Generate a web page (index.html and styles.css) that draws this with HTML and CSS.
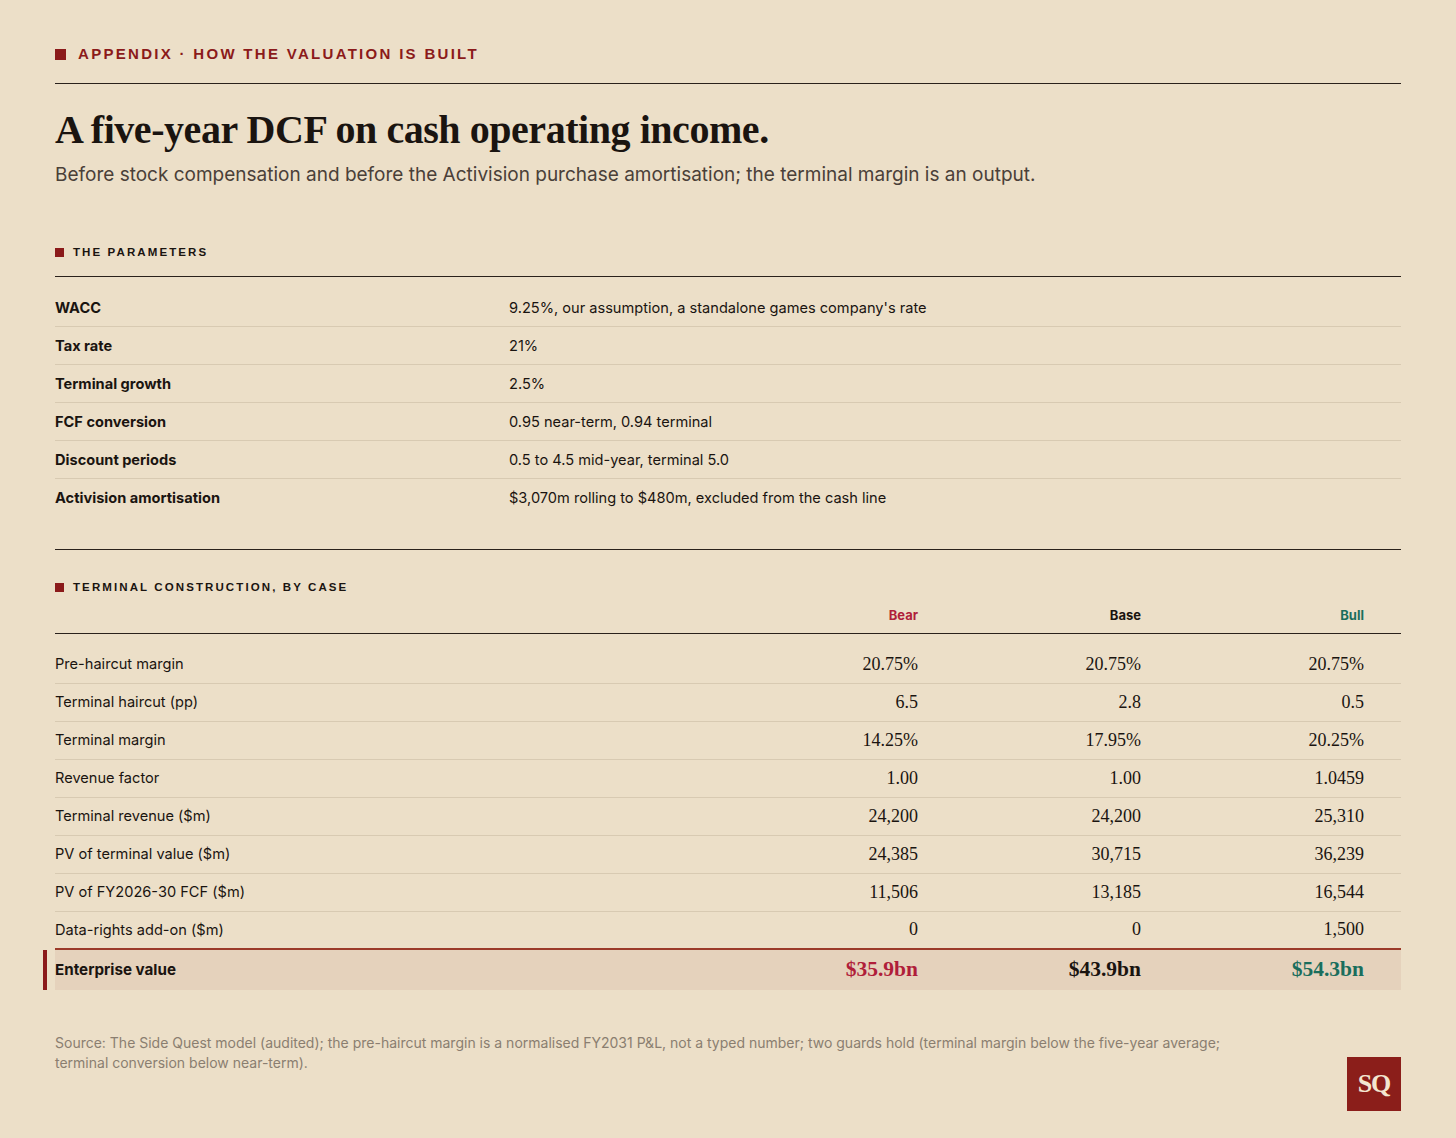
FILE: index.html
```html
<!DOCTYPE html>
<html lang="en">
<head>
<meta charset="utf-8">
<title>Appendix · How the valuation is built</title>
<link rel="stylesheet" href="styles.css">
</head>
<body>
<main class="page">
  <header class="eyebrow"><span class="sq-mark"></span><span>APPENDIX · HOW THE VALUATION IS BUILT</span></header>
  <hr class="rule">
  <h1 class="title">A five-year DCF on cash operating income.</h1>
  <p class="dek">Before stock compensation and before the Activision purchase amortisation; the terminal margin is an output.</p>

  <section class="params">
    <h2 class="label"><span class="sq-small"></span>THE PARAMETERS</h2>
    <div class="ptable">
      <div class="prow"><span class="pkey">WACC</span><span class="pval">9.25%, our assumption, a standalone games company's rate</span></div>
      <div class="prow"><span class="pkey">Tax rate</span><span class="pval">21%</span></div>
      <div class="prow"><span class="pkey">Terminal growth</span><span class="pval">2.5%</span></div>
      <div class="prow"><span class="pkey">FCF conversion</span><span class="pval">0.95 near-term, 0.94 terminal</span></div>
      <div class="prow"><span class="pkey">Discount periods</span><span class="pval">0.5 to 4.5 mid-year, terminal 5.0</span></div>
      <div class="prow"><span class="pkey">Activision amortisation</span><span class="pval">$3,070m rolling to $480m, excluded from the cash line</span></div>
    </div>
  </section>

  <section class="cases">
    <h2 class="label"><span class="sq-small"></span>TERMINAL CONSTRUCTION, BY CASE</h2>
    <div class="ctable">
      <div class="chead"><span></span><span class="num bear">Bear</span><span class="num">Base</span><span class="num bull">Bull</span></div>
      <div class="cbody">
        <div class="crow"><span>Pre-haircut margin</span><span class="num">20.75%</span><span class="num">20.75%</span><span class="num">20.75%</span></div>
        <div class="crow"><span>Terminal haircut (pp)</span><span class="num">6.5</span><span class="num">2.8</span><span class="num">0.5</span></div>
        <div class="crow"><span>Terminal margin</span><span class="num">14.25%</span><span class="num">17.95%</span><span class="num">20.25%</span></div>
        <div class="crow"><span>Revenue factor</span><span class="num">1.00</span><span class="num">1.00</span><span class="num">1.0459</span></div>
        <div class="crow"><span>Terminal revenue ($m)</span><span class="num">24,200</span><span class="num">24,200</span><span class="num">25,310</span></div>
        <div class="crow"><span>PV of terminal value ($m)</span><span class="num">24,385</span><span class="num">30,715</span><span class="num">36,239</span></div>
        <div class="crow"><span>PV of FY2026-30 FCF ($m)</span><span class="num">11,506</span><span class="num">13,185</span><span class="num">16,544</span></div>
        <div class="crow last"><span>Data-rights add-on ($m)</span><span class="num">0</span><span class="num">0</span><span class="num">1,500</span></div>
        <div class="crow total"><span>Enterprise value</span><span class="num bear">$35.9bn</span><span class="num">$43.9bn</span><span class="num bull">$54.3bn</span></div>
      </div>
    </div>
  </section>

  <footer class="foot">
    <p class="source">Source: The Side Quest model (audited); the pre-haircut margin is a normalised FY2031 P&amp;L, not a typed number; two guards hold (terminal margin below the five-year average; terminal conversion below near-term).</p>
    <div class="logo">SQ</div>
  </footer>
</main>
</body>
</html>
```
FILE: styles.css
```css
* { box-sizing: border-box; }
html, body { margin: 0; padding: 0; }
body {
  background: #ecdfc8;
  color: #1a1410;
  font-family: Inter, "Liberation Sans", Arial, sans-serif;
}
.page {
  width: 1456px;
  padding: 45px 55px 0 55px;
}
.eyebrow {
  display: flex;
  align-items: center;
  gap: 12px;
  color: #8b1a1a;
  font-family: "Liberation Sans", Arial, sans-serif;
  font-size: 15px;
  font-weight: 700;
  letter-spacing: 2.3px;
  line-height: 18px;
}
.sq-mark {
  width: 11px;
  height: 11px;
  background: #8b1a1a;
  flex: none;
}
.rule {
  border: 0;
  border-top: 1px solid #2a211b;
  margin: 20px 0 0 0;
}
.title {
  font-family: "Liberation Serif", "Times New Roman", serif;
  font-weight: 700;
  font-size: 40px;
  line-height: 48px;
  letter-spacing: -0.45px;
  margin: 22px 0 0 0;
  color: #1a1410;
}
.dek {
  font-size: 19px;
  line-height: 26px;
  color: #4a4038;
  margin: 8px 0 0 0;
}
.label {
  display: flex;
  align-items: center;
  gap: 9px;
  font-family: "Liberation Sans", Arial, sans-serif;
  font-size: 11.5px;
  font-weight: 700;
  letter-spacing: 2.1px;
  line-height: 14px;
  margin: 0;
  color: #1a1410;
}
.sq-small {
  width: 9px;
  height: 9px;
  background: #8b1a1a;
  flex: none;
}
.params { margin-top: 57px; }
.params .label { margin-bottom: 17px; }
.ptable {
  border-top: 1px solid #2a211b;
  padding-top: 12px;
}
.prow {
  display: grid;
  grid-template-columns: 454px 1fr;
  height: 38px;
  align-items: center;
  border-bottom: 1px solid #d8cab2;
  font-size: 14.6px;
}
.prow:last-child { border-bottom: 0; }
.pkey { font-weight: 700; }
.cases {
  margin-top: 32px;
  border-top: 1px solid #2a211b;
  padding-top: 30px;
}
.chead,
.crow {
  display: grid;
  grid-template-columns: 1fr 223px 223px 223px;
  align-items: center;
}
.crow {
  height: 38px;
  font-size: 14.6px;
  border-bottom: 1px solid #d8cab2;
}
.num {
  text-align: right;
  padding-right: 37px;
}
.crow .num {
  font-family: "Liberation Serif", "Times New Roman", serif;
  font-size: 18px;
}
.chead {
  height: 25.5px;
  margin-top: 14px;
  border-bottom: 1.5px solid #2a211b;
  align-items: start;
  line-height: 15px;
}
.chead .num {
  font-weight: 700;
  font-size: 13px;
}
.bear { color: #b01e3a; }
.bull { color: #1a6e5c; }
.cbody { padding-top: 12px; }
.crow.last { border-bottom: 0; height: 36px; }
.total {
  position: relative;
  height: 42px;
  background: #e5d2bc;
  border-top: 2px solid #9b3a2a;
  border-bottom: 0;
  font-weight: 700;
  font-size: 15.2px;
}
.total::before {
  content: "";
  position: absolute;
  left: -12px;
  top: 0;
  bottom: 0;
  width: 4px;
  background: #8b1a1a;
}
.crow.total .num {
  font-weight: 700;
  font-size: 21.5px;
}
.foot {
  display: flex;
  justify-content: space-between;
  align-items: flex-start;
  margin-top: 43px;
}
.source {
  margin: 0;
  max-width: 1170px;
  font-size: 14px;
  line-height: 20px;
  color: #8a7e70;
}
.logo {
  margin-top: 24px;
  width: 54px;
  height: 54px;
  background: #8b1e1a;
  color: #f3e6d0;
  font-family: "Liberation Serif", "Times New Roman", serif;
  font-weight: 700;
  font-size: 26px;
  letter-spacing: -1px;
  display: flex;
  align-items: center;
  justify-content: center;
  flex: none;
}
```
